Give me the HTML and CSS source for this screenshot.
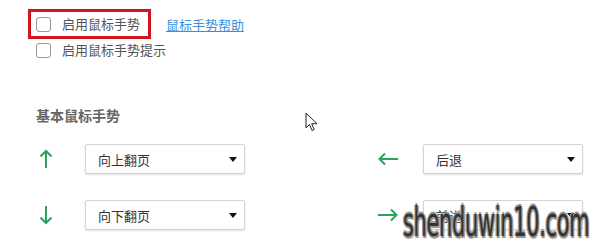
FILE: index.html
```html
<!DOCTYPE html>
<html lang="zh-CN">
<head>
  <meta charset="UTF-8">
  <title>鼠标手势</title>
  <link rel="stylesheet" href="styles.css">
</head>
<body>

  <!-- Options -->
  <div class="options">
    <div class="row-first">
      <label class="highlight">
        <span class="check"></span>
        <span class="label">启用鼠标手势</span>
      </label>
      <a class="help" href="#">鼠标手势帮助</a>
    </div>
    <label class="row-second">
      <span class="check"></span>
      <span class="label">启用鼠标手势提示</span>
    </label>
  </div>

  <!-- Gestures -->
  <div class="section-title">基本鼠标手势</div>
  <div class="gestures">
    <div class="gesture">
      <span class="arrow">
        <svg width="14" height="20" viewBox="0 0 14 20"><path d="M7 19V2M1.5 7.5L7 2l5.5 5.5" fill="none" stroke="#2ba35b" stroke-width="2"/></svg>
      </span>
      <div class="select"><span>向上翻页</span><i class="caret"></i></div>
    </div>
    <div class="gesture">
      <span class="arrow">
        <svg width="22" height="14" viewBox="0 0 22 14"><path d="M21 7H2.5M8 1.5L2.5 7 8 12.5" fill="none" stroke="#2ba35b" stroke-width="2"/></svg>
      </span>
      <div class="select"><span>后退</span><i class="caret"></i></div>
    </div>
    <div class="gesture">
      <span class="arrow">
        <svg width="14" height="20" viewBox="0 0 14 20"><path d="M7 1v17M1.5 12.5L7 18l5.5-5.5" fill="none" stroke="#2ba35b" stroke-width="2"/></svg>
      </span>
      <div class="select"><span>向下翻页</span><i class="caret"></i></div>
    </div>
    <div class="gesture">
      <span class="arrow">
        <svg width="22" height="14" viewBox="0 0 22 14"><path d="M1 7h18.5M14 1.5L19.5 7 14 12.5" fill="none" stroke="#2ba35b" stroke-width="2"/></svg>
      </span>
      <div class="select"><span>前进</span><i class="caret"></i></div>
    </div>
  </div>

  <!-- Mouse pointer -->
  <svg class="pointer" width="14" height="20" viewBox="0 0 14 20"><path d="M1 1v15l3.5-3.5 2.5 6 2.2-1-2.5-5.8H12z" fill="#fff" stroke="#222" stroke-width="1"/></svg>

  <div class="watermark">shenduwin10.com</div>

</body>
</html>
```

FILE: styles.css
```css
body {
  font-family: "Noto Sans CJK SC", "Noto Sans", sans-serif;
  background-color: #ffffff;
  color: #555555;
  margin: 0;
  padding: 0;
  width: 598px;
  height: 252px;
  position: relative;
  overflow: hidden;
}

/* Options */
.options {
  padding: 9px 0 0 28px;
  font-size: 13px;
}
.row-first {
  display: flex;
  align-items: center;
}
.highlight {
  display: flex;
  align-items: center;
  gap: 11px;
  height: 24px;
  padding: 0 8px 0 5px;
  border: 3px solid #d0161c;
}
.help {
  margin-left: 15px;
  color: #3b8fd9;
  text-decoration: underline;
}
.row-second {
  display: flex;
  align-items: center;
  gap: 11px;
  height: 20px;
  margin: 1px 0 0 8px;
}
.check {
  width: 13px;
  height: 13px;
  border: 1px solid #999999;
  border-radius: 3px;
  background: #ffffff;
}
.label {
  line-height: 18px;
}

.section-title {
  margin: 45px 0 0 36px;
  line-height: 20px;
  font-size: 14px;
  font-weight: bold;
  color: #666666;
}

/* Gestures grid */
.gestures {
  display: grid;
  grid-template-columns: 338px 209px;
  row-gap: 26px;
  margin: 19px 0 0 36px;
}
.gesture {
  display: flex;
  align-items: center;
  height: 30px;
}
.arrow {
  width: 49px;
  display: flex;
  justify-content: flex-start;
  padding-left: 3px;
  box-sizing: border-box;
}
.select {
  width: 160px;
  height: 30px;
  box-sizing: border-box;
  border: 1px solid #d4d4d4;
  border-radius: 2px;
  box-shadow: 0 1px 2px rgba(0, 0, 0, 0.12);
  background: #ffffff;
  display: flex;
  align-items: center;
  justify-content: space-between;
  padding: 0 7px 0 12px;
  font-size: 13px;
  color: #333333;
}
.caret {
  width: 0;
  height: 0;
  border-left: 4px solid transparent;
  border-right: 4px solid transparent;
  border-top: 5px solid #111111;
}

.pointer {
  position: absolute;
  left: 305px;
  top: 112px;
}

/* watermark lies over the last select */
.watermark {
  position: absolute;
  left: 403px;
  top: 200px;
  font-family: "DejaVu Sans Condensed", "Liberation Sans", sans-serif;
  font-size: 40px;
  line-height: 44px;
  letter-spacing: -0.5px;
  white-space: nowrap;
  color: #333333;
  transform: scaleX(0.58);
  transform-origin: left top;
  text-shadow: 2px 0 0 #999999, -2px 0 0 #999999, 0 2px 0 #999999, 0 -2px 0 #999999, 2px 2px 1px #888888;
}
```
